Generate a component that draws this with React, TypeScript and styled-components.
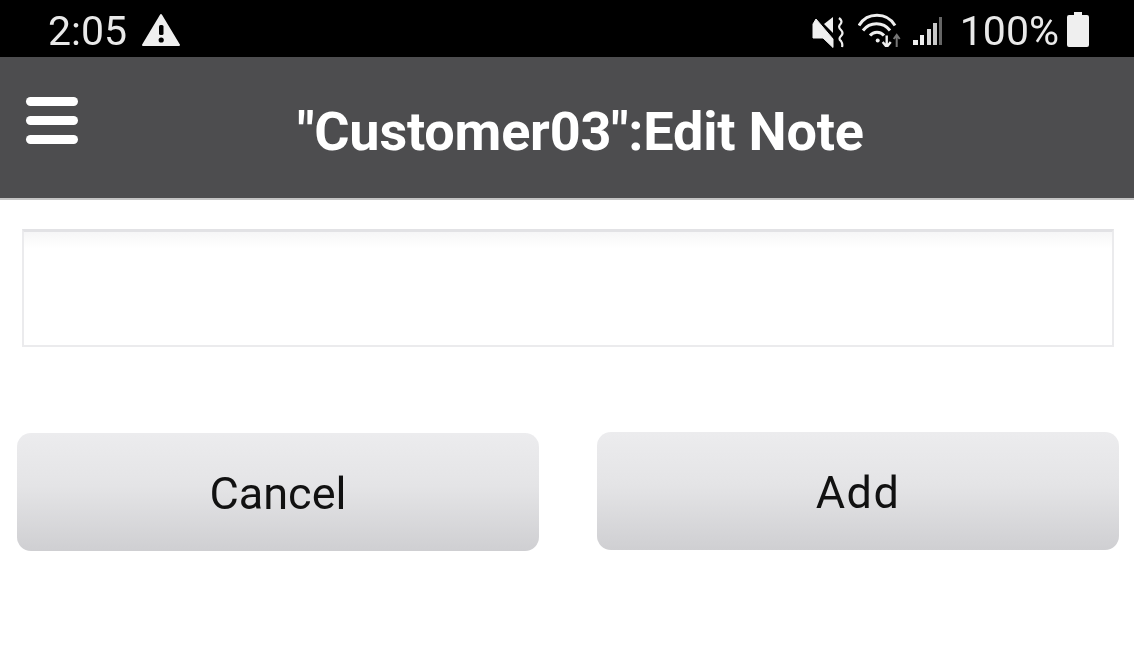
import styled, { createGlobalStyle } from 'styled-components'

const GlobalStyle = createGlobalStyle`
  html, body {
    margin: 0;
    padding: 0;
    background: #fff;
    font-family: Roboto, "Liberation Sans", sans-serif;
  }
`

const Page = styled.div`
  width: 1134px;
  height: 660px;
  overflow: hidden;
  display: flex;
  flex-direction: column;
  background: #fff;
  filter: blur(0.6px);
`

const StatusBar = styled.div`
  height: 57px;
  flex: none;
  box-sizing: border-box;
  padding: 0 45px 0 48px;
  display: flex;
  align-items: center;
  justify-content: space-between;
  background: #000;
  color: #e9e9e9;
`

const StatusGroup = styled.div`
  display: flex;
  align-items: center;
`

const StatusText = styled.span<{ $gap?: number }>`
  margin-left: ${({ $gap }) => $gap ?? 0}px;
  font-size: 41px;
  line-height: 57px;
  position: relative;
  top: 3px;
`

const StatusIcon = styled.svg<{ $gap?: number }>`
  margin-left: ${({ $gap }) => $gap ?? 0}px;
  flex: none;
`

const Header = styled.header`
  height: 141px;
  flex: none;
  display: flex;
  align-items: center;
  position: relative;
  background: #4d4d4f;
  border-bottom: 2px solid #c4c4c4;
`

const MenuButton = styled.div`
  position: absolute;
  left: 26px;
  top: 40px;
  width: 52px;
  display: flex;
  flex-direction: column;
  gap: 10px;
`

const MenuLine = styled.span`
  height: 9px;
  border-radius: 5px;
  background: #fff;
`

const Title = styled.h1`
  width: 100%;
  margin: 7px 0 0;
  padding-left: 27px;
  box-sizing: border-box;
  text-align: center;
  color: #fff;
  font-size: 54px;
  font-weight: 700;
  letter-spacing: -0.2px;
`

const Content = styled.main`
  display: flex;
  flex-direction: column;
  padding: 29px 15px 0 17px;
`

const NoteBox = styled.div`
  height: 118px;
  margin: 0 5px;
  box-sizing: border-box;
  border: 2px solid #ebebed;
  border-top: 3px solid #e2e2e5;
  background: linear-gradient(#f6f6f7, #fff 16px);
`

const ButtonRow = styled.div`
  display: flex;
  justify-content: space-between;
  margin-top: 85px;
`

const ActionButton = styled.button<{ $shift?: number; $tracking?: number }>`
  width: 522px;
  height: 118px;
  margin-top: ${({ $shift }) => $shift ?? 0}px;
  padding: 3px 0 0;
  border: none;
  border-radius: 14px;
  background: linear-gradient(#ececee, #e4e4e6 45%, #cfcfd2);
  color: #111;
  font-family: inherit;
  font-size: 45px;
  font-weight: 400;
  letter-spacing: ${({ $tracking }) => $tracking ?? 0}px;
`

function App() {
  return (
    <Page>
      <GlobalStyle />
      <StatusBar>
        <StatusGroup>
          <StatusText>2:05</StatusText>
          <StatusIcon $gap={15} width="38" height="38" viewBox="0 0 38 38">
            <path d="M19 5 L37 35 H1 Z" fill="#efefef" stroke="#efefef" strokeWidth="2" strokeLinejoin="round" />
            <rect x="17" y="15" width="4.5" height="10" rx="1.5" fill="#000" />
            <circle cx="19.2" cy="30" r="2.6" fill="#000" />
          </StatusIcon>
        </StatusGroup>
        <StatusGroup>
          <StatusIcon width="33" height="40" viewBox="0 0 33 40">
            <path d="M12 15 L21 8 V24 Z" fill="#efefef" />
            <path d="M4 10 L21 30 V38.5 L11 29 H1 V15 Z" fill="#efefef" stroke="#efefef" strokeWidth="1" strokeLinejoin="round" />
            <path d="M27 9 q4 3 1.5 6 q-3 3 0.5 6 q3 3 0 6 q-3 3 0 5 q2 3 1 6" fill="none" stroke="#efefef" strokeWidth="2.2" />
          </StatusIcon>
          <StatusIcon $gap={13} width="46" height="36" viewBox="0 0 46 36">
            <path d="M1 14.5 A21 21 0 0 1 37 14.5" fill="none" stroke="#efefef" strokeWidth="3" />
            <path d="M5 19.5 A17 17 0 0 1 32 19.5" fill="none" stroke="#efefef" strokeWidth="3" />
            <path d="M12 24.5 A9 9 0 0 1 26 24.5" fill="none" stroke="#efefef" strokeWidth="3" />
            <circle cx="19.7" cy="29.5" r="2" fill="#efefef" />
            <path d="M28.7 24.5 V35 M24.7 31 L28.7 36 L32.7 31" fill="none" stroke="#efefef" strokeWidth="2.4" />
            <path d="M38.7 36 V25 M35.7 28 L38.7 24 L41.7 28" fill="none" stroke="#777" strokeWidth="2" />
          </StatusIcon>
          <StatusIcon $gap={8} width="32" height="34" viewBox="0 0 32 34">
            <rect x="1" y="28" width="5" height="5" fill="#efefef" />
            <rect x="8" y="23" width="4" height="10" fill="#efefef" />
            <rect x="15" y="17" width="4" height="16" fill="#d8d8d8" />
            <rect x="21" y="11" width="4" height="22" fill="#c8c8c8" />
            <rect x="27" y="5" width="3" height="28" fill="#666" />
          </StatusIcon>
          <StatusText $gap={16}>100%</StatusText>
          <StatusIcon $gap={8} width="22" height="37" viewBox="0 0 22 37">
            <path d="M7 2 H15 V5 H20 Q22 5 22 7 V35 Q22 37 20 37 H2 Q0 37 0 35 V7 Q0 5 2 5 H7 Z" fill="#efefef" />
          </StatusIcon>
        </StatusGroup>
      </StatusBar>
      <Header>
        <MenuButton>
          <MenuLine />
          <MenuLine />
          <MenuLine />
        </MenuButton>
        <Title>"Customer03":Edit Note</Title>
      </Header>
      <Content>
        <NoteBox />
        <ButtonRow>
          <ActionButton $shift={1}>Cancel</ActionButton>
          <ActionButton $tracking={1.5}>Add</ActionButton>
        </ButtonRow>
      </Content>
    </Page>
  )
}

export default App
